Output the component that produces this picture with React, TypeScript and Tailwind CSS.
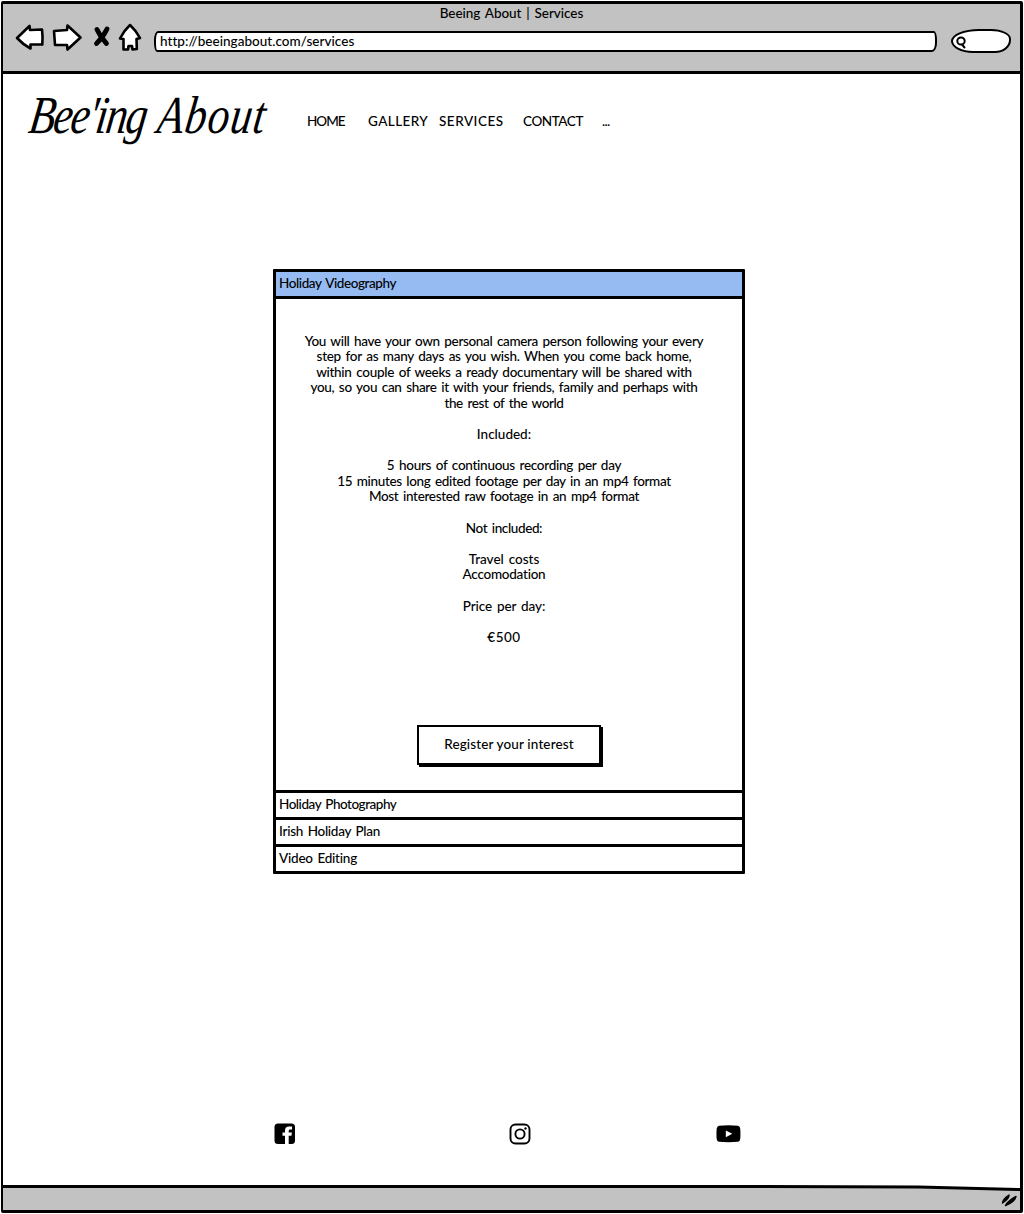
import React, { useLayoutEffect, useRef } from "react";

/** A single line of text whose tracking is tuned so it fills a given width. */
function Fit({ w, text, className = "" }: { w: number; text: string; className?: string }) {
  const ref = useRef<HTMLSpanElement>(null);
  useLayoutEffect(() => {
    const el = ref.current;
    if (!el) return;
    el.style.letterSpacing = "0px";
    const natural = el.offsetWidth;
    el.style.letterSpacing = `${(w - natural) / text.length}px`;
  }, [w, text]);
  return (
    <span ref={ref} className={`inline-block whitespace-pre ${className}`}>
      {text}
    </span>
  );
}

const nav = [
  { t: "HOME", w: 38, c: "w-[61px]" },
  { t: "GALLERY", w: 60, c: "w-[71px]" },
  { t: "SERVICES", w: 65, c: "w-[84px]" },
  { t: "CONTACT", w: 60, c: "w-[79px]" },
  { t: "...", w: 8, c: "w-[10px]" },
];

const copy: [string, number][] = [
  ["You will have your own personal camera person following your every", 398],
  ["step for as many days as you wish. When you come back home,", 375],
  ["within couple of weeks a ready documentary will be shared with", 376],
  ["you, so you can share it with your friends, family and perhaps with", 387],
  ["the rest of the world", 119],
  ["", 0],
  ["Included:", 54],
  ["", 0],
  ["5 hours of continuous recording per day", 235],
  ["15 minutes long edited footage per day in an mp4 format", 334],
  ["Most interested raw footage in an mp4 format", 270],
  ["", 0],
  ["Not included:", 76],
  ["", 0],
  ["Travel costs", 71],
  ["Accomodation", 83],
  ["", 0],
  ["Price per day:", 83],
  ["", 0],
  ["€500", 33],
];

function BrowserIcons() {
  return (
    <svg className="-mt-[9px]" width="130" height="34" viewBox="14 20.500 130 34" fill="#fff" stroke="#000" strokeWidth="2.6" strokeLinejoin="round" strokeLinecap="round">
      <path d="M17 37.5 L29.5 25.5 L30 29.5 L42 29 Q43 37 42.3 44 L30.5 44 L30.5 48 Q23 44 17 37.5Z" />
      <path d="M54 30.5 L67 29.5 L67.5 25 L80.5 37 L67.5 49 L67 44.5 L55 44.5 Q54.500 37 54 30.500Z" />
      <path d="M97 29 Q100 36 106.500 43 M107 28.500 Q103 37 96.500 43" fill="none" strokeWidth="4.800" />
      <path d="M130 24.500 Q136 30 140 37.500 L136.500 38.500 L136.800 48.500 L132.500 49 L132 45.500 L128.500 45.500 L128 49 L123.500 49 L123.500 38.500 L120 38 Q124 30 130 24.500Z" />
    </svg>
  );
}

function Facebook() {
  return (
    <svg width="22" height="22" viewBox="0 0 22 22">
      <rect x="0.500" y="0.500" width="20.500" height="20.500" rx="3.500" />
      <path d="M11 21 V12.700 H8.500 V9.500 H11 V7.600 Q11 3.400 15 3.400 H18 V6.600 H16.200 Q14.700 6.600 14.700 8 V9.500 H17.900 L17.400 12.700 H14.700 V21Z" fill="#fff" />
    </svg>
  );
}

function Instagram() {
  return (
    <svg width="22" height="22" viewBox="0 0 22 22" fill="none" stroke="#000" strokeWidth="1.900">
      <rect x="1.500" y="1.500" width="19" height="19" rx="5" />
      <circle cx="11" cy="11" r="4.600" />
      <circle cx="16.500" cy="5.500" r="1.200" fill="#000" stroke="none" />
    </svg>
  );
}

function YouTube() {
  return (
    <svg width="25" height="18" viewBox="0 0 25 18">
      <path d="M3 0.800 Q12.500 -0.200 22 0.800 Q24 1.200 24.200 3.500 Q24.700 9 24.200 14 Q24 16.500 22 16.800 Q12.500 17.700 3 16.800 Q1 16.500 0.700 14 Q0.200 9 0.700 3.500 Q1 1.200 3 0.800Z" />
      <path d="M9.800 5.600 L16.300 8.800 L9.800 12.200Z" fill="#fff" />
    </svg>
  );
}

function Row({ text, w, className }: { text: string; w: number; className: string }) {
  return (
    <div className={`flex items-center border-black pb-[2px] pl-[3px] ${className}`}>
      <Fit text={text} w={w} />
    </div>
  );
}

export default function App() {
  return (
    <div className="h-[1214px] w-[1024px] overflow-hidden bg-white pl-px pr-px pt-px font-['Lato',sans-serif] text-[13.5px] font-medium leading-[16px] text-black [word-spacing:1.5px]">
      <div className="flex h-[1212px] flex-col rounded-[2px] border-[3px] border-l-2 border-black">
        <header className="h-[70px] shrink-0 border-b-[3px] border-black bg-[#c2c2c2]">
          <div className="flex h-[20px] justify-center pt-px">
            <Fit text="Beeing About | Services" w={143} />
          </div>
          <div className="flex h-[36px] items-center pl-[11px]">
            <BrowserIcons />
            <div className="ml-[10px] -mt-px flex h-[21px] w-[783px] items-center rounded-[4px_3px_5px_3px/9px_9px_9px_9px] border-2 border-black bg-white pb-[2px] pl-[4px]">
              <Fit text="http://beeingabout.com/services" w={194} />
            </div>
            <div className="-mt-[2px] ml-[14px] flex h-[24px] w-[60px] items-center rounded-[28px_20px_16px_22px/12px_10px_13px_12px] border-[2.5px] border-black bg-white pl-[2px]">
              <svg className="mt-[3px] shrink-0" width="12" height="13" viewBox="0 0 12 13" fill="none" stroke="#000" strokeWidth="2" strokeLinecap="round">
                <ellipse cx="6" cy="5" rx="3.700" ry="3.600" />
                <path d="M7 8.500 L9.500 11.500" />
              </svg>
            </div>
          </div>
        </header>

        <main className="flex min-h-0 flex-1 flex-col">
          <div className="flex h-[90px] shrink-0">
            <div className="w-[304px] pl-[24px] pt-[15px]">
              <h1 className="flex origin-[0_45px] gap-[12px] font-['Liberation_Serif',serif] text-[43px] font-normal italic leading-[60px] [transform:scaleY(1.24)_skewX(-10deg)]">
                <Fit text="Bee'ing" w={117} />
                <Fit text="About" w={109} />
              </h1>
            </div>
            <nav className="flex pt-[39px]">
              {nav.map((n) => (
                <a key={n.t} className={`block ${n.c}`}>
                  <Fit text={n.t} w={n.w} />
                </a>
              ))}
            </nav>
          </div>

          <section className="ml-[270px] mt-[105px] flex h-[605px] w-[472px] shrink-0 flex-col rounded-[1px] border-[3px] border-black">
            <Row text="Holiday Videography" w={117} className="h-[27px] shrink-0 border-b-[3px] bg-[#95bbf2]" />
            <div className="flex h-[494px] shrink-0 flex-col items-center border-b-[3px] border-black pt-[34.5px]">
              <div className="mr-[10px] flex flex-col items-center leading-[15.6px]">
                {copy.map(([t, w], i) => (
                  <div key={i} className="flex h-[15.6px] justify-center">
                    {t && <Fit text={t} w={w} />}
                  </div>
                ))}
              </div>
              <button className="mt-[79.5px] flex h-[40px] w-[184px] items-center justify-center border-2 border-black bg-white pb-px shadow-[2px_2px_0_0_#000]">
                <Fit text="Register your interest" w={130} />
              </button>
            </div>
            <Row text="Holiday Photography" w={117} className="h-[27px] shrink-0 border-b-[3px]" />
            <Row text="Irish Holiday Plan" w={101} className="h-[27px] shrink-0 border-b-[3px]" />
            <Row text="Video Editing" w={78} className="h-[24px] shrink-0" />
          </section>

          <footer className="mt-[249px] flex h-[22px] shrink-0 items-center pl-[271px]">
            <Facebook />
            <div className="ml-[213px] flex">
              <Instagram />
            </div>
            <div className="ml-[185px] flex">
              <YouTube />
            </div>
          </footer>
        </main>

        <div className="h-[25px] shrink-0 bg-black [clip-path:polygon(0_0,70%_0,90%_0.500px,100%_3px,100%_100%,0_100%)]">
          <div className="flex h-full items-center justify-end bg-[#c2c2c2] pr-[2px] pt-[4px] [clip-path:polygon(0_3px,70%_3px,90%_3.500px,100%_6px,100%_100%,0_100%)]">
            <svg width="18" height="16" viewBox="0 0 18 16" strokeLinecap="round" strokeLinejoin="round" stroke="#000" strokeWidth="1.500">
              <path d="M2.500 11 Q3 7 9 3 Q9.500 6 2.500 11Z M5.500 13.500 Q8 9 16 4.500 Q14.500 10 5.500 13.500Z" />
            </svg>
          </div>
        </div>
      </div>
    </div>
  );
}
